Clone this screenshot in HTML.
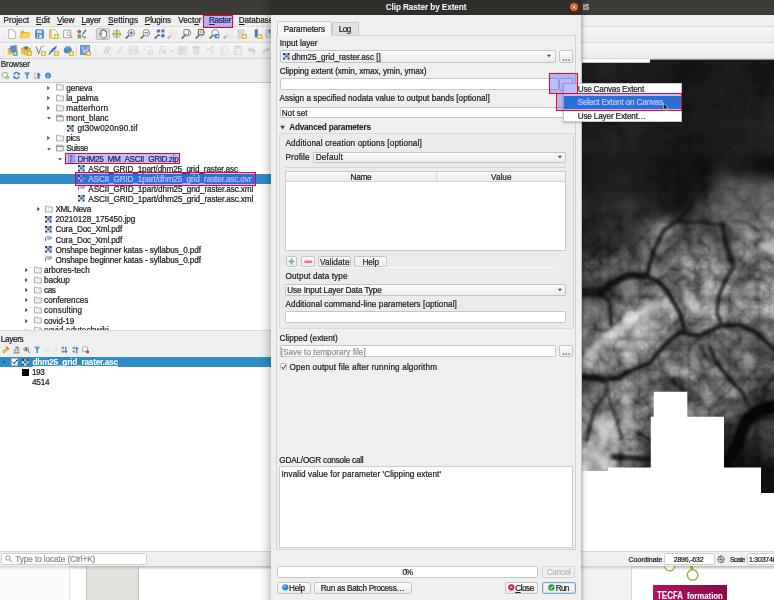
<!DOCTYPE html>
<html><head><meta charset="utf-8"><title>Clip Raster by Extent</title>
<style>
html,body{margin:0;padding:0;}
body{width:774px;height:600px;overflow:hidden;position:relative;background:#efefef;font-family:"Liberation Sans","DejaVu Sans",sans-serif;font-size:8.2px;color:#1c1c1c;}
.a{position:absolute;box-sizing:border-box;}
.t{position:absolute;white-space:nowrap;line-height:1;-webkit-text-stroke:.22px currentColor;}
.t.b{-webkit-text-stroke:.08px currentColor;}
u{text-decoration:underline;text-underline-offset:0.8px;text-decoration-thickness:0.7px;}
.btn{position:absolute;box-sizing:border-box;border:1px solid #c4c4c4;border-radius:2px;background:linear-gradient(#fbfbfb,#ececec);}
.inp{position:absolute;box-sizing:border-box;border:1px solid #c6c6c6;border-radius:1.5px;background:#fff;}
.an{position:absolute;box-sizing:border-box;border:1.35px solid #f5001d;background:rgba(42,42,255,.3);}
.ln{position:absolute;background:#d2d2d2;}
svg{position:absolute;overflow:visible;}
</style></head><body>
<!-- ============ QGIS main window ============ -->
<div class="a" style="left:0;top:0;width:774px;height:14.6px;background:#3d3c38"></div>
<div class="a" style="left:0;top:14.6px;width:774px;height:44px;background:#efefef"></div>
<div class="a" style="left:0;top:27px;width:774px;height:15.2px;background:linear-gradient(#f6f6f6,#ececec)"></div>
<div class="a" style="left:0;top:43.2px;width:774px;height:15.2px;background:linear-gradient(#f6f6f6,#ececec)"></div>
<div class="ln" style="left:0;top:26px;width:774px;height:1px;background:#dcdcdc"></div>
<div class="ln" style="left:0;top:42.2px;width:774px;height:1px;background:#d8d8d8"></div>
<div class="ln" style="left:0;top:58.4px;width:774px;height:1px;background:#d4d4d4"></div>
<!-- Browser tree -->
<div class="a" style="left:0;top:81.8px;width:272px;height:248.4px;background:#fff;border-top:1px solid #c9c9c9;"></div>
<!-- selected row -->
<div class="a" style="left:0;top:174.2px;width:272px;height:9.6px;background:#308cc6"></div>
<!-- Layers -->
<div class="a" style="left:0;top:330.2px;width:272px;height:27px;background:#efefef;border-top:1px solid #d9d9d9"></div>
<div class="a" style="left:0;top:356.8px;width:272px;height:194.5px;background:#fff"></div>
<div class="a" style="left:0;top:357.2px;width:272px;height:9.6px;background:#308cc6"></div>
<div class="a" style="left:22.3px;top:369.2px;width:6.9px;height:6.4px;background:#000"></div>
<!-- map canvas -->
<div class="a" style="left:582px;top:59px;width:192px;height:492.3px;background:#fff"></div>
<svg style="left:582px;top:58px;overflow:hidden" width="192" height="438" viewBox="582 58 192 438">
<defs>
<clipPath id="demclip"><path d="M582 62.7 H650 V59.6 H775 V493 H761 V467.6 H724 V416.7 H687.3 V391.8 H653.8 V416.8 H650.8 V467.6 H608 V471 H582z"/></clipPath>
<filter id="b6" color-interpolation-filters="sRGB" x="-20%" y="-20%" width="140%" height="140%"><feGaussianBlur stdDeviation="6"/></filter>
<filter id="b3" color-interpolation-filters="sRGB" x="-20%" y="-20%" width="140%" height="140%"><feGaussianBlur stdDeviation="3"/></filter>
<filter id="b15" color-interpolation-filters="sRGB" x="-20%" y="-20%" width="140%" height="140%"><feGaussianBlur stdDeviation="1.4"/></filter>
<filter id="b08" color-interpolation-filters="sRGB" x="-20%" y="-20%" width="140%" height="140%"><feGaussianBlur stdDeviation="0.8"/></filter>
<filter id="veins" color-interpolation-filters="sRGB" x="0" y="0" width="100%" height="100%"><feTurbulence type="turbulence" baseFrequency="0.05" numOctaves="4" seed="11" result="t1"/><feColorMatrix in="t1" type="matrix" values="1 0 0 0 0  1 0 0 0 0  1 0 0 0 0  0 0 0 0 1" result="g1"/><feTurbulence type="turbulence" baseFrequency="0.037" numOctaves="4" seed="3" result="t2"/><feColorMatrix in="t2" type="matrix" values="1 0 0 0 0  1 0 0 0 0  1 0 0 0 0  0 0 0 0 1" result="g2"/><feComposite in="g1" in2="g2" operator="arithmetic" k1="0" k2="0.5" k3="0.5" k4="0"/><feColorMatrix type="matrix" values="1.9 0 0 0 -0.115  1.9 0 0 0 -0.115  1.9 0 0 0 -0.115  0 0 0 0 1"/><feGaussianBlur stdDeviation="0.5"/></filter>
<linearGradient id="vfade" x1="0" y1="0" x2="0" y2="1"><stop offset="0" stop-color="#fff" stop-opacity=".3"/><stop offset=".27" stop-color="#fff" stop-opacity=".35"/><stop offset=".46" stop-color="#fff" stop-opacity="1"/><stop offset="1" stop-color="#fff" stop-opacity="1"/></linearGradient>
<mask id="vmask" maskUnits="userSpaceOnUse" x="582" y="58" width="192" height="438"><rect x="582" y="58" width="192" height="438" fill="url(#vfade)"/></mask>
</defs>
<g clip-path="url(#demclip)">
<rect x="570" y="50" width="220" height="460" fill="#222"/>
<g filter="url(#b6)">
<rect x="560" y="58" width="40.5" height="20.5" fill="rgb(26,26,26)"/>
<rect x="600" y="58" width="20.5" height="20.5" fill="rgb(31,31,31)"/>
<rect x="620" y="58" width="20.5" height="20.5" fill="rgb(31,31,31)"/>
<rect x="640" y="58" width="20.5" height="20.5" fill="rgb(26,26,26)"/>
<rect x="660" y="58" width="20.5" height="20.5" fill="rgb(20,20,20)"/>
<rect x="560" y="78" width="40.5" height="20.5" fill="rgb(28,28,28)"/>
<rect x="600" y="78" width="20.5" height="20.5" fill="rgb(28,28,28)"/>
<rect x="620" y="78" width="20.5" height="20.5" fill="rgb(28,28,28)"/>
<rect x="640" y="78" width="20.5" height="20.5" fill="rgb(26,26,26)"/>
<rect x="660" y="78" width="20.5" height="20.5" fill="rgb(22,22,22)"/>
<rect x="560" y="98" width="40.5" height="20.5" fill="rgb(28,28,28)"/>
<rect x="600" y="98" width="20.5" height="20.5" fill="rgb(28,28,28)"/>
<rect x="620" y="98" width="20.5" height="20.5" fill="rgb(28,28,28)"/>
<rect x="640" y="98" width="20.5" height="20.5" fill="rgb(26,26,26)"/>
<rect x="660" y="98" width="20.5" height="20.5" fill="rgb(22,22,22)"/>
<rect x="560" y="118" width="40.5" height="20.5" fill="rgb(28,28,28)"/>
<rect x="600" y="118" width="20.5" height="20.5" fill="rgb(29,29,29)"/>
<rect x="620" y="118" width="20.5" height="20.5" fill="rgb(29,29,29)"/>
<rect x="640" y="118" width="20.5" height="20.5" fill="rgb(28,28,28)"/>
<rect x="660" y="118" width="20.5" height="20.5" fill="rgb(26,26,26)"/>
<rect x="560" y="138" width="40.5" height="20.5" fill="rgb(28,28,28)"/>
<rect x="600" y="138" width="20.5" height="20.5" fill="rgb(31,31,31)"/>
<rect x="620" y="138" width="20.5" height="20.5" fill="rgb(31,31,31)"/>
<rect x="640" y="138" width="20.5" height="20.5" fill="rgb(28,28,28)"/>
<rect x="660" y="138" width="20.5" height="20.5" fill="rgb(24,24,24)"/>
<rect x="674" y="58" width="20.5" height="20.5" fill="rgb(20,20,20)"/>
<rect x="694" y="58" width="20.5" height="20.5" fill="rgb(22,22,22)"/>
<rect x="714" y="58" width="20.5" height="20.5" fill="rgb(24,24,24)"/>
<rect x="734" y="58" width="20.5" height="20.5" fill="rgb(22,22,22)"/>
<rect x="754" y="58" width="50.5" height="20.5" fill="rgb(20,20,20)"/>
<rect x="774" y="58" width="50.5" height="20.5" fill="rgb(20,20,20)"/>
<rect x="674" y="78" width="20.5" height="20.5" fill="rgb(22,22,22)"/>
<rect x="694" y="78" width="20.5" height="20.5" fill="rgb(24,24,24)"/>
<rect x="714" y="78" width="20.5" height="20.5" fill="rgb(26,26,26)"/>
<rect x="734" y="78" width="20.5" height="20.5" fill="rgb(24,24,24)"/>
<rect x="754" y="78" width="50.5" height="20.5" fill="rgb(22,22,22)"/>
<rect x="774" y="78" width="50.5" height="20.5" fill="rgb(22,22,22)"/>
<rect x="674" y="98" width="20.5" height="20.5" fill="rgb(22,22,22)"/>
<rect x="694" y="98" width="20.5" height="20.5" fill="rgb(26,26,26)"/>
<rect x="714" y="98" width="20.5" height="20.5" fill="rgb(28,28,28)"/>
<rect x="734" y="98" width="20.5" height="20.5" fill="rgb(28,28,28)"/>
<rect x="754" y="98" width="50.5" height="20.5" fill="rgb(28,28,28)"/>
<rect x="774" y="98" width="50.5" height="20.5" fill="rgb(28,28,28)"/>
<rect x="674" y="118" width="20.5" height="20.5" fill="rgb(24,24,24)"/>
<rect x="694" y="118" width="20.5" height="20.5" fill="rgb(26,26,26)"/>
<rect x="714" y="118" width="20.5" height="20.5" fill="rgb(28,28,28)"/>
<rect x="734" y="118" width="20.5" height="20.5" fill="rgb(31,31,31)"/>
<rect x="754" y="118" width="50.5" height="20.5" fill="rgb(35,35,35)"/>
<rect x="774" y="118" width="50.5" height="20.5" fill="rgb(35,35,35)"/>
<rect x="674" y="138" width="20.5" height="20.5" fill="rgb(22,22,22)"/>
<rect x="694" y="138" width="20.5" height="20.5" fill="rgb(22,22,22)"/>
<rect x="714" y="138" width="20.5" height="20.5" fill="rgb(26,26,26)"/>
<rect x="734" y="138" width="20.5" height="20.5" fill="rgb(29,29,29)"/>
<rect x="754" y="138" width="50.5" height="20.5" fill="rgb(33,33,33)"/>
<rect x="774" y="138" width="50.5" height="20.5" fill="rgb(33,33,33)"/>
<rect x="560" y="158" width="40.5" height="20.5" fill="rgb(24,24,24)"/>
<rect x="600" y="158" width="20.5" height="20.5" fill="rgb(28,28,28)"/>
<rect x="620" y="158" width="20.5" height="20.5" fill="rgb(29,29,29)"/>
<rect x="640" y="158" width="20.5" height="20.5" fill="rgb(24,24,24)"/>
<rect x="660" y="158" width="20.5" height="20.5" fill="rgb(20,20,20)"/>
<rect x="560" y="178" width="40.5" height="20.5" fill="rgb(28,28,28)"/>
<rect x="600" y="178" width="20.5" height="20.5" fill="rgb(33,33,33)"/>
<rect x="620" y="178" width="20.5" height="20.5" fill="rgb(35,35,35)"/>
<rect x="640" y="178" width="20.5" height="20.5" fill="rgb(28,28,28)"/>
<rect x="660" y="178" width="20.5" height="20.5" fill="rgb(20,20,20)"/>
<rect x="560" y="198" width="40.5" height="20.5" fill="rgb(31,31,31)"/>
<rect x="600" y="198" width="20.5" height="20.5" fill="rgb(40,40,40)"/>
<rect x="620" y="198" width="20.5" height="20.5" fill="rgb(42,42,42)"/>
<rect x="640" y="198" width="20.5" height="20.5" fill="rgb(33,33,33)"/>
<rect x="660" y="198" width="20.5" height="20.5" fill="rgb(24,24,24)"/>
<rect x="560" y="218" width="40.5" height="20.5" fill="rgb(33,33,33)"/>
<rect x="600" y="218" width="20.5" height="20.5" fill="rgb(40,40,40)"/>
<rect x="620" y="218" width="20.5" height="20.5" fill="rgb(46,46,46)"/>
<rect x="640" y="218" width="20.5" height="20.5" fill="rgb(79,79,79)"/>
<rect x="660" y="218" width="20.5" height="20.5" fill="rgb(117,117,117)"/>
<rect x="560" y="238" width="40.5" height="20.5" fill="rgb(33,33,33)"/>
<rect x="600" y="238" width="20.5" height="20.5" fill="rgb(42,42,42)"/>
<rect x="620" y="238" width="20.5" height="20.5" fill="rgb(68,68,68)"/>
<rect x="640" y="238" width="20.5" height="20.5" fill="rgb(108,108,108)"/>
<rect x="660" y="238" width="20.5" height="20.5" fill="rgb(81,81,81)"/>
<rect x="674" y="158" width="20.5" height="20.5" fill="rgb(19,19,19)"/>
<rect x="694" y="158" width="20.5" height="20.5" fill="rgb(15,15,15)"/>
<rect x="714" y="158" width="20.5" height="20.5" fill="rgb(31,31,31)"/>
<rect x="734" y="158" width="20.5" height="20.5" fill="rgb(22,22,22)"/>
<rect x="754" y="158" width="50.5" height="20.5" fill="rgb(13,13,13)"/>
<rect x="774" y="158" width="50.5" height="20.5" fill="rgb(11,11,11)"/>
<rect x="674" y="178" width="20.5" height="20.5" fill="rgb(19,19,19)"/>
<rect x="694" y="178" width="20.5" height="20.5" fill="rgb(26,26,26)"/>
<rect x="714" y="178" width="20.5" height="20.5" fill="rgb(86,86,86)"/>
<rect x="734" y="178" width="20.5" height="20.5" fill="rgb(93,93,93)"/>
<rect x="754" y="178" width="50.5" height="20.5" fill="rgb(86,86,86)"/>
<rect x="774" y="178" width="50.5" height="20.5" fill="rgb(81,81,81)"/>
<rect x="674" y="198" width="20.5" height="20.5" fill="rgb(22,22,22)"/>
<rect x="694" y="198" width="20.5" height="20.5" fill="rgb(64,64,64)"/>
<rect x="714" y="198" width="20.5" height="20.5" fill="rgb(97,97,97)"/>
<rect x="734" y="198" width="20.5" height="20.5" fill="rgb(97,97,97)"/>
<rect x="754" y="198" width="50.5" height="20.5" fill="rgb(100,100,100)"/>
<rect x="774" y="198" width="50.5" height="20.5" fill="rgb(100,100,100)"/>
<rect x="674" y="218" width="20.5" height="20.5" fill="rgb(68,68,68)"/>
<rect x="694" y="218" width="20.5" height="20.5" fill="rgb(73,73,73)"/>
<rect x="714" y="218" width="20.5" height="20.5" fill="rgb(82,82,82)"/>
<rect x="734" y="218" width="20.5" height="20.5" fill="rgb(108,108,108)"/>
<rect x="754" y="218" width="50.5" height="20.5" fill="rgb(115,115,115)"/>
<rect x="774" y="218" width="50.5" height="20.5" fill="rgb(115,115,115)"/>
<rect x="674" y="238" width="20.5" height="20.5" fill="rgb(93,93,93)"/>
<rect x="694" y="238" width="20.5" height="20.5" fill="rgb(104,104,104)"/>
<rect x="714" y="238" width="20.5" height="20.5" fill="rgb(82,82,82)"/>
<rect x="734" y="238" width="20.5" height="20.5" fill="rgb(108,108,108)"/>
<rect x="754" y="238" width="50.5" height="20.5" fill="rgb(129,129,129)"/>
<rect x="774" y="238" width="50.5" height="20.5" fill="rgb(129,129,129)"/>
<rect x="560" y="258" width="40.5" height="20.5" fill="rgb(90,90,90)"/>
<rect x="600" y="258" width="20.5" height="20.5" fill="rgb(99,99,99)"/>
<rect x="620" y="258" width="20.5" height="20.5" fill="rgb(90,90,90)"/>
<rect x="640" y="258" width="20.5" height="20.5" fill="rgb(81,81,81)"/>
<rect x="660" y="258" width="20.5" height="20.5" fill="rgb(99,99,99)"/>
<rect x="560" y="278" width="40.5" height="20.5" fill="rgb(37,37,37)"/>
<rect x="600" y="278" width="20.5" height="20.5" fill="rgb(55,55,55)"/>
<rect x="620" y="278" width="20.5" height="20.5" fill="rgb(81,81,81)"/>
<rect x="640" y="278" width="20.5" height="20.5" fill="rgb(99,99,99)"/>
<rect x="660" y="278" width="20.5" height="20.5" fill="rgb(90,90,90)"/>
<rect x="560" y="298" width="40.5" height="20.5" fill="rgb(90,90,90)"/>
<rect x="600" y="298" width="20.5" height="20.5" fill="rgb(81,81,81)"/>
<rect x="620" y="298" width="20.5" height="20.5" fill="rgb(108,108,108)"/>
<rect x="640" y="298" width="20.5" height="20.5" fill="rgb(153,153,153)"/>
<rect x="660" y="298" width="20.5" height="20.5" fill="rgb(135,135,135)"/>
<rect x="560" y="318" width="40.5" height="20.5" fill="rgb(99,99,99)"/>
<rect x="600" y="318" width="20.5" height="20.5" fill="rgb(90,90,90)"/>
<rect x="620" y="318" width="20.5" height="20.5" fill="rgb(162,162,162)"/>
<rect x="640" y="318" width="20.5" height="20.5" fill="rgb(171,171,171)"/>
<rect x="660" y="318" width="20.5" height="20.5" fill="rgb(135,135,135)"/>
<rect x="560" y="338" width="40.5" height="20.5" fill="rgb(108,108,108)"/>
<rect x="600" y="338" width="20.5" height="20.5" fill="rgb(126,126,126)"/>
<rect x="620" y="338" width="20.5" height="20.5" fill="rgb(153,153,153)"/>
<rect x="640" y="338" width="20.5" height="20.5" fill="rgb(126,126,126)"/>
<rect x="660" y="338" width="20.5" height="20.5" fill="rgb(90,90,90)"/>
<rect x="674" y="258" width="20.5" height="20.5" fill="rgb(117,117,117)"/>
<rect x="694" y="258" width="20.5" height="20.5" fill="rgb(126,126,126)"/>
<rect x="714" y="258" width="20.5" height="20.5" fill="rgb(108,108,108)"/>
<rect x="734" y="258" width="20.5" height="20.5" fill="rgb(81,81,81)"/>
<rect x="754" y="258" width="50.5" height="20.5" fill="rgb(108,108,108)"/>
<rect x="774" y="258" width="50.5" height="20.5" fill="rgb(108,108,108)"/>
<rect x="674" y="278" width="20.5" height="20.5" fill="rgb(117,117,117)"/>
<rect x="694" y="278" width="20.5" height="20.5" fill="rgb(135,135,135)"/>
<rect x="714" y="278" width="20.5" height="20.5" fill="rgb(126,126,126)"/>
<rect x="734" y="278" width="20.5" height="20.5" fill="rgb(99,99,99)"/>
<rect x="754" y="278" width="50.5" height="20.5" fill="rgb(126,126,126)"/>
<rect x="774" y="278" width="50.5" height="20.5" fill="rgb(126,126,126)"/>
<rect x="674" y="298" width="20.5" height="20.5" fill="rgb(135,135,135)"/>
<rect x="694" y="298" width="20.5" height="20.5" fill="rgb(153,153,153)"/>
<rect x="714" y="298" width="20.5" height="20.5" fill="rgb(126,126,126)"/>
<rect x="734" y="298" width="20.5" height="20.5" fill="rgb(108,108,108)"/>
<rect x="754" y="298" width="50.5" height="20.5" fill="rgb(135,135,135)"/>
<rect x="774" y="298" width="50.5" height="20.5" fill="rgb(135,135,135)"/>
<rect x="674" y="318" width="20.5" height="20.5" fill="rgb(108,108,108)"/>
<rect x="694" y="318" width="20.5" height="20.5" fill="rgb(117,117,117)"/>
<rect x="714" y="318" width="20.5" height="20.5" fill="rgb(117,117,117)"/>
<rect x="734" y="318" width="20.5" height="20.5" fill="rgb(99,99,99)"/>
<rect x="754" y="318" width="50.5" height="20.5" fill="rgb(108,108,108)"/>
<rect x="774" y="318" width="50.5" height="20.5" fill="rgb(108,108,108)"/>
<rect x="674" y="338" width="20.5" height="20.5" fill="rgb(99,99,99)"/>
<rect x="694" y="338" width="20.5" height="20.5" fill="rgb(90,90,90)"/>
<rect x="714" y="338" width="20.5" height="20.5" fill="rgb(90,90,90)"/>
<rect x="734" y="338" width="20.5" height="20.5" fill="rgb(99,99,99)"/>
<rect x="754" y="338" width="50.5" height="20.5" fill="rgb(81,81,81)"/>
<rect x="774" y="338" width="50.5" height="20.5" fill="rgb(81,81,81)"/>
<rect x="560" y="358" width="40.5" height="20.5" fill="rgb(126,126,126)"/>
<rect x="600" y="358" width="20.5" height="20.5" fill="rgb(135,135,135)"/>
<rect x="620" y="358" width="20.5" height="20.5" fill="rgb(135,135,135)"/>
<rect x="640" y="358" width="20.5" height="20.5" fill="rgb(99,99,99)"/>
<rect x="660" y="358" width="20.5" height="20.5" fill="rgb(135,135,135)"/>
<rect x="560" y="378" width="40.5" height="20.5" fill="rgb(81,81,81)"/>
<rect x="600" y="378" width="20.5" height="20.5" fill="rgb(99,99,99)"/>
<rect x="620" y="378" width="20.5" height="20.5" fill="rgb(126,126,126)"/>
<rect x="640" y="378" width="20.5" height="20.5" fill="rgb(117,117,117)"/>
<rect x="660" y="378" width="20.5" height="20.5" fill="rgb(90,90,90)"/>
<rect x="560" y="398" width="40.5" height="20.5" fill="rgb(108,108,108)"/>
<rect x="600" y="398" width="20.5" height="20.5" fill="rgb(126,126,126)"/>
<rect x="620" y="398" width="20.5" height="20.5" fill="rgb(153,153,153)"/>
<rect x="640" y="398" width="20.5" height="20.5" fill="rgb(126,126,126)"/>
<rect x="660" y="398" width="20.5" height="20.5" fill="rgb(126,126,126)"/>
<rect x="560" y="418" width="40.5" height="20.5" fill="rgb(135,135,135)"/>
<rect x="600" y="418" width="20.5" height="20.5" fill="rgb(171,171,171)"/>
<rect x="620" y="418" width="20.5" height="20.5" fill="rgb(153,153,153)"/>
<rect x="640" y="418" width="20.5" height="20.5" fill="rgb(117,117,117)"/>
<rect x="660" y="418" width="20.5" height="20.5" fill="rgb(117,117,117)"/>
<rect x="560" y="438" width="40.5" height="20.5" fill="rgb(153,153,153)"/>
<rect x="600" y="438" width="20.5" height="20.5" fill="rgb(171,171,171)"/>
<rect x="620" y="438" width="20.5" height="20.5" fill="rgb(135,135,135)"/>
<rect x="640" y="438" width="20.5" height="20.5" fill="rgb(81,81,81)"/>
<rect x="660" y="438" width="20.5" height="20.5" fill="rgb(81,81,81)"/>
<rect x="560" y="458" width="40.5" height="20.5" fill="rgb(180,180,180)"/>
<rect x="600" y="458" width="20.5" height="20.5" fill="rgb(180,180,180)"/>
<rect x="620" y="458" width="20.5" height="20.5" fill="rgb(81,81,81)"/>
<rect x="640" y="458" width="20.5" height="20.5" fill="rgb(55,55,55)"/>
<rect x="660" y="458" width="20.5" height="20.5" fill="rgb(55,55,55)"/>
<rect x="560" y="478" width="40.5" height="20.5" fill="rgb(180,180,180)"/>
<rect x="600" y="478" width="20.5" height="20.5" fill="rgb(180,180,180)"/>
<rect x="620" y="478" width="20.5" height="20.5" fill="rgb(81,81,81)"/>
<rect x="640" y="478" width="20.5" height="20.5" fill="rgb(55,55,55)"/>
<rect x="660" y="478" width="20.5" height="20.5" fill="rgb(55,55,55)"/>
<rect x="674" y="358" width="20.5" height="20.5" fill="rgb(135,135,135)"/>
<rect x="694" y="358" width="20.5" height="20.5" fill="rgb(112,112,112)"/>
<rect x="714" y="358" width="20.5" height="20.5" fill="rgb(94,94,94)"/>
<rect x="734" y="358" width="20.5" height="20.5" fill="rgb(112,112,112)"/>
<rect x="754" y="358" width="50.5" height="20.5" fill="rgb(103,103,103)"/>
<rect x="774" y="358" width="50.5" height="20.5" fill="rgb(99,99,99)"/>
<rect x="674" y="378" width="20.5" height="20.5" fill="rgb(67,67,67)"/>
<rect x="694" y="378" width="20.5" height="20.5" fill="rgb(103,103,103)"/>
<rect x="714" y="378" width="20.5" height="20.5" fill="rgb(112,112,112)"/>
<rect x="734" y="378" width="20.5" height="20.5" fill="rgb(94,94,94)"/>
<rect x="754" y="378" width="50.5" height="20.5" fill="rgb(76,76,76)"/>
<rect x="774" y="378" width="50.5" height="20.5" fill="rgb(72,72,72)"/>
<rect x="674" y="398" width="20.5" height="20.5" fill="rgb(99,99,99)"/>
<rect x="694" y="398" width="20.5" height="20.5" fill="rgb(106,106,106)"/>
<rect x="714" y="398" width="20.5" height="20.5" fill="rgb(106,106,106)"/>
<rect x="734" y="398" width="20.5" height="20.5" fill="rgb(57,57,57)"/>
<rect x="754" y="398" width="50.5" height="20.5" fill="rgb(20,20,20)"/>
<rect x="774" y="398" width="50.5" height="20.5" fill="rgb(15,15,15)"/>
<rect x="674" y="418" width="20.5" height="20.5" fill="rgb(90,90,90)"/>
<rect x="694" y="418" width="20.5" height="20.5" fill="rgb(90,90,90)"/>
<rect x="714" y="418" width="20.5" height="20.5" fill="rgb(55,55,55)"/>
<rect x="734" y="418" width="20.5" height="20.5" fill="rgb(35,35,35)"/>
<rect x="754" y="418" width="50.5" height="20.5" fill="rgb(59,59,59)"/>
<rect x="774" y="418" width="50.5" height="20.5" fill="rgb(63,63,63)"/>
<rect x="674" y="438" width="20.5" height="20.5" fill="rgb(55,55,55)"/>
<rect x="694" y="438" width="20.5" height="20.5" fill="rgb(55,55,55)"/>
<rect x="714" y="438" width="20.5" height="20.5" fill="rgb(28,28,28)"/>
<rect x="734" y="438" width="20.5" height="20.5" fill="rgb(24,24,24)"/>
<rect x="754" y="438" width="50.5" height="20.5" fill="rgb(42,42,42)"/>
<rect x="774" y="438" width="50.5" height="20.5" fill="rgb(46,46,46)"/>
<rect x="674" y="458" width="20.5" height="20.5" fill="rgb(37,37,37)"/>
<rect x="694" y="458" width="20.5" height="20.5" fill="rgb(37,37,37)"/>
<rect x="714" y="458" width="20.5" height="20.5" fill="rgb(20,20,20)"/>
<rect x="734" y="458" width="20.5" height="20.5" fill="rgb(13,13,13)"/>
<rect x="754" y="458" width="50.5" height="20.5" fill="rgb(17,17,17)"/>
<rect x="774" y="458" width="50.5" height="20.5" fill="rgb(19,19,19)"/>
<rect x="674" y="478" width="20.5" height="20.5" fill="rgb(28,28,28)"/>
<rect x="694" y="478" width="20.5" height="20.5" fill="rgb(28,28,28)"/>
<rect x="714" y="478" width="20.5" height="20.5" fill="rgb(17,17,17)"/>
<rect x="734" y="478" width="20.5" height="20.5" fill="rgb(13,13,13)"/>
<rect x="754" y="478" width="50.5" height="20.5" fill="rgb(15,15,15)"/>
<rect x="774" y="478" width="50.5" height="20.5" fill="rgb(15,15,15)"/>
<rect x="674" y="498" width="20.5" height="20.5" fill="rgb(28,28,28)"/>
<rect x="694" y="498" width="20.5" height="20.5" fill="rgb(28,28,28)"/>
<rect x="714" y="498" width="20.5" height="20.5" fill="rgb(17,17,17)"/>
<rect x="734" y="498" width="20.5" height="20.5" fill="rgb(13,13,13)"/>
<rect x="754" y="498" width="50.5" height="20.5" fill="rgb(15,15,15)"/>
<rect x="774" y="498" width="50.5" height="20.5" fill="rgb(15,15,15)"/>
</g>
<g filter="url(#b3)" fill="none" stroke-linecap="round" stroke-linejoin="round">
<path d="M588.0 354.0 L606.0 338.0 L623.0 325.0 L645.0 312.0 L668.0 300.0" stroke="#d8d8d8" stroke-width="9" opacity="0.8"/>
<path d="M626.0 398.0 L627.0 430.0" stroke="#d0d0d0" stroke-width="4" opacity="0.8"/>
<path d="M600.0 420.0 L603.0 436.0" stroke="#eeeeee" stroke-width="8" opacity="0.8"/>
<path d="M688.0 292.0 L692.0 308.0" stroke="#dddddd" stroke-width="7" opacity="0.7"/>
<path d="M590.0 452.0 L604.0 462.0" stroke="#e6e6e6" stroke-width="8" opacity="0.8"/>
<path d="M668.0 366.0 L676.0 372.0" stroke="#c4c4c4" stroke-width="8" opacity="0.7"/>
</g>
<g filter="url(#b15)" fill="none" stroke-linecap="round" stroke-linejoin="round">
<path d="M578.0 293.0 L600.0 291.5" stroke="#0c0c0c" stroke-width="9" opacity="1"/>
<path d="M580.0 293.0 L601.7 291.0 L618.0 280.0 L630.0 275.0 L647.0 276.0" stroke="#101010" stroke-width="6.5" opacity="1"/>
<path d="M647.0 276.0 L660.0 283.0 L667.0 291.0 L673.0 301.0 L680.0 313.0 L684.0 328.0" stroke="#141414" stroke-width="4" opacity="1"/>
<path d="M692.0 204.0 L681.0 218.0 L664.0 230.0 L655.0 248.0 L649.0 266.0 L647.0 276.0" stroke="#141414" stroke-width="4" opacity="0.95"/>
<path d="M686.0 231.0 L688.7 250.0 L699.0 260.7" stroke="#3c3c3c" stroke-width="2.2" opacity="0.8"/>
<path d="M731.0 220.7 L747.0 223.0 L758.0 231.0" stroke="#303030" stroke-width="2.4" opacity="0.8"/>
<path d="M722.0 224.0 L726.0 244.7 L734.0 267.0" stroke="#101010" stroke-width="4.6" opacity="1"/>
<path d="M578.0 376.5 L604.0 379.0" stroke="#111" stroke-width="7" opacity="1"/>
<path d="M580.0 376.0 L605.0 379.0 L618.0 378.0 L630.0 371.0 L650.0 363.0 L655.0 356.0 L666.0 344.0 L680.0 332.0 L699.0 336.0 L720.0 326.0 L740.0 325.0 L757.0 333.0 L776.0 351.0" stroke="#181818" stroke-width="4.4" opacity="1"/>
<path d="M672.0 222.0 L700.0 222.0 L722.0 225.0 L724.0 240.0 L728.0 252.0 L731.0 258.0 L734.0 266.0 L724.0 283.0 L719.0 296.0 L717.0 313.0 L721.0 323.0" stroke="#1e1e1e" stroke-width="3.6" opacity="1"/>
<path d="M703.0 178.0 L705.0 196.0" stroke="#141414" stroke-width="5" opacity="0.7"/>
<path d="M606.7 379.0 L605.0 396.0 L595.0 408.0 L590.0 425.0 L586.7 441.0" stroke="#2a2a2a" stroke-width="3.2" opacity="1"/>
<path d="M606.7 379.0 L610.0 402.0 L617.0 421.0 L622.0 440.0" stroke="#363636" stroke-width="2.6" opacity="1"/>
<path d="M638.0 433.0 L650.0 440.0" stroke="#202020" stroke-width="3.5" opacity="1"/>
<path d="M614.0 457.0 L652.0 459.0" stroke="#1c1c1c" stroke-width="6" opacity="1"/>
<path d="M710.0 346.7 L715.0 360.0 L723.0 370.7 L731.0 381.0 L742.0 392.0 L747.0 402.7 L753.0 410.0" stroke="#181818" stroke-width="3.6" opacity="1"/>
<path d="M778.0 406.0 L760.0 410.0 L748.0 418.0 L741.0 433.0 L737.0 446.0 L729.0 458.0 L725.0 470.0" stroke="#060606" stroke-width="12" opacity="1"/>
<path d="M776.0 375.0 L765.7 386.0 L764.0 400.0" stroke="#1c1c1c" stroke-width="3.2" opacity="1"/>
<path d="M603.0 295.0 L610.0 303.0 L611.0 325.0" stroke="#141414" stroke-width="3.2" opacity="1"/>
<path d="M610.0 303.0 L638.0 303.0 L635.0 310.0" stroke="#505050" stroke-width="2.2" opacity="1"/>
<path d="M653.0 401.0 L641.7 406.0 L635.0 400.0" stroke="#404040" stroke-width="2" opacity="1"/>
<path d="M672.0 380.0 L683.0 390.0" stroke="#202020" stroke-width="4.5" opacity="1"/>
<path d="M734.0 266.0 L749.0 268.0 L776.0 276.0" stroke="#4a4a4a" stroke-width="3" opacity="0.8"/>
<path d="M690.0 258.0 L697.0 275.0 L690.0 296.0" stroke="#555" stroke-width="2" opacity="0.7"/>
<path d="M740.0 280.0 L745.0 300.0 L742.0 318.0" stroke="#606060" stroke-width="2" opacity="0.7"/>
<path d="M756.0 290.0 L760.0 310.0" stroke="#606060" stroke-width="2" opacity="0.7"/>
<path d="M590.0 300.0 L596.0 330.0 L590.0 345.0" stroke="#4a4a4a" stroke-width="2" opacity="0.7"/>
<path d="M640.0 330.0 L650.0 345.0" stroke="#555" stroke-width="2" opacity="0.6"/>
<path d="M700.0 345.0 L706.0 356.0" stroke="#333" stroke-width="2.5" opacity="0.8"/>
<path d="M690.0 400.0 L715.0 395.0 L735.0 402.0" stroke="#444" stroke-width="2" opacity="0.7"/>
<path d="M700.0 372.0 L716.0 384.0" stroke="#444" stroke-width="2" opacity="0.7"/>
<path d="M755.0 430.0 L764.0 450.0" stroke="#2a2a2a" stroke-width="3" opacity="0.8"/>
</g>
<g mask="url(#vmask)" style="mix-blend-mode:overlay">
<rect x="582" y="58" width="192" height="438" filter="url(#veins)" opacity=".5" style="mix-blend-mode:overlay"/></g>
</g>
</svg>
<!-- status bar -->
<div class="a" style="left:0;top:551.3px;width:774px;height:15px;background:#efefef;border-top:1px solid #d6d6d6;"></div>
<div class="inp" style="left:1px;top:553px;width:145.5px;height:12.3px;border-color:#cfcfcf"></div>
<div class="inp" style="left:664px;top:553px;width:50.5px;height:12.3px;border-color:#cfcfcf"></div>
<div class="inp" style="left:746.5px;top:553px;width:40px;height:12.3px;border-color:#cfcfcf"></div>
<!-- below the QGIS window: another app -->
<div class="a" style="left:0;top:566.3px;width:774px;height:34px;background:#fff"></div>
<div class="a" style="left:0;top:566.3px;width:774px;height:4px;background:linear-gradient(rgba(0,0,0,.16),rgba(0,0,0,0))"></div>
<div class="a" style="left:0;top:566.3px;width:70px;height:34px;background:#fafafa;border-right:1px solid #e3e3e3"></div>
<div class="a" style="left:85.5px;top:566.3px;width:53.5px;height:34px;background:#e4e2dd;box-shadow:inset 1px 0 1px #c5c3be, inset -1px 0 1px #c5c3be"></div>
<div class="a" style="left:582px;top:566.3px;width:49.5px;height:34px;background:#f1f1f1;border-right:1px solid #d8d8d8"></div>
<div class="a" style="left:653px;top:585px;width:74px;height:16px;background:linear-gradient(90deg,#b3125f,#8c0a47)"></div>
<svg style="left:655px;top:566.3px;overflow:hidden" width="50" height="20" viewBox="655 566.3 50 20"><circle cx="669.7" cy="566.3" r="4.9" fill="#fff" stroke="#94b13c" stroke-width="1.3"/><circle cx="692.6" cy="575.3" r="5.3" fill="#fff" stroke="#94b13c" stroke-width="1.4"/><path d="M689.6 566.3 h3.4 l0.4 4 h-2.6z" fill="#94b13c"/></svg>
<div class="a" style="left:0;top:566.3px;width:774px;height:4px;background:linear-gradient(rgba(0,0,0,.14),rgba(0,0,0,0))"></div>
<svg style="left:2.5px;top:29.5px" width="3" height="10" viewBox="0 0 3 10" ><path d="M1 0 V10" stroke="#d9d9d9" stroke-width=".9" stroke-dasharray=".9 .9"/></svg>
<svg style="left:2.5px;top:45.5px" width="3" height="10" viewBox="0 0 3 10" ><path d="M1 0 V10" stroke="#d9d9d9" stroke-width=".9" stroke-dasharray=".9 .9"/></svg>
<svg style="left:93.8px;top:29.5px" width="3" height="10" viewBox="0 0 3 10" ><path d="M1 0 V10" stroke="#d9d9d9" stroke-width=".9" stroke-dasharray=".9 .9"/></svg>
<svg style="left:94.8px;top:45.5px" width="3" height="10" viewBox="0 0 3 10" ><path d="M1 0 V10" stroke="#d9d9d9" stroke-width=".9" stroke-dasharray=".9 .9"/></svg>
<svg style="left:7.9px;top:29.3px" width="8" height="10" viewBox="0 0 8 10" ><path d="M0.6 0.5 H5 L7.4 2.9 V9.5 H0.6z" fill="#fff" stroke="#a9a9a9" stroke-width=".8"/><path d="M5 0.5 V2.9 H7.4" fill="none" stroke="#b5b5b5" stroke-width=".6"/></svg>
<svg style="left:20.4px;top:29.3px" width="11" height="10" viewBox="0 0 11 10" ><path d="M0.6 1.8 H3.8 L4.6 2.9 H8.6 V8.8 H0.6z" fill="#e9b43a"/><path d="M0.4 9 L1.9 4 H10.4 L8.8 9z" fill="#fbd25b" stroke="#e2ad30" stroke-width=".5"/></svg>
<svg style="left:35.3px;top:29.3px" width="9" height="10" viewBox="0 0 9 10" ><rect x=".5" y=".8" width="8" height="8.5" rx=".9" fill="#5b8ed0" stroke="#3f6fb0" stroke-width=".7"/><rect x="2" y="1.2" width="5" height="2.8" fill="#c9dcf3"/><rect x="2.3" y="5.8" width="4.4" height="3.3" fill="#e8eef7"/><rect x="3" y="6.5" width="1.4" height="2" fill="#3f5f8f"/></svg>
<svg style="left:49px;top:29.3px" width="10" height="10" viewBox="0 0 10 10" ><path d="M0.6 0.8 H6 L8.4 3.2 V9.3 H0.6z" fill="#fdfdfd" stroke="#b0a070" stroke-width=".7"/><rect x="0.6" y="0.8" width="2.1" height="8.5" fill="#e8c244"/><rect x="5.2" y="5.4" width="4.4" height="4.2" fill="#e8c63c" stroke="#c7a320" stroke-width=".5"/><path d="M7.4 6.2 V8.8 M6.1 7.5 H8.7" stroke="#fff" stroke-width=".9"/></svg>
<svg style="left:62.5px;top:29.3px" width="10" height="10" viewBox="0 0 10 10" ><path d="M0.6 1.3 H7.8 V8.7 H0.6z" fill="#fcfcfc" stroke="#8c99b3" stroke-width=".8"/><circle cx="5.6" cy="4.8" r="1.9" fill="#f4f4f4" stroke="#9a9a9a" stroke-width=".7"/><path d="M6.9 6.3 L9.3 9.2" stroke="#caa52b" stroke-width="1.3"/></svg>
<svg style="left:76.5px;top:29.3px" width="10" height="10" viewBox="0 0 10 10" ><circle cx="2.3" cy="2.6" r="1.9" fill="#d9553a"/><rect x=".5" y="5.2" width="3.6" height="4.2" fill="#6aa76a"/><path d="M9 .8 L5.6 5.4" stroke="#4a7fc0" stroke-width="1.5"/><path d="M5.2 6 L6.5 7.2 L4.6 8.2z" fill="#6b6b6b"/><rect x="6.2" y="7.4" width="2.6" height="2" fill="#8d8d8d"/></svg>
<div class="a" style="left:96.3px;top:28px;width:13.5px;height:12.3px;background:#dadada;border:1px solid #bdbdbd;border-radius:1.5px"></div>
<svg style="left:99px;top:29.3px" width="9" height="10" viewBox="0 0 9 10" ><path d="M2.2 5.6 V2 Q2.2 1.3 2.9 1.3 Q3.5 1.3 3.5 2 V1.3 Q3.5 .6 4.2 .6 Q4.9 .6 4.9 1.3 V1.7 Q4.9 1.1 5.6 1.1 Q6.2 1.1 6.2 1.8 V2.5 Q6.3 2 6.9 2 Q7.5 2 7.5 2.8 V6.2 Q7.5 9.2 4.9 9.2 Q3.3 9.2 2.4 7.6 L.8 5.2 Q.5 4.5 1.1 4.3 Q1.6 4.2 2.2 5.6z" fill="#fff" stroke="#3a3a3a" stroke-width=".7"/></svg>
<svg style="left:111.8px;top:29.3px" width="10" height="10" viewBox="0 0 10 10" ><path d="M4.8 .2 L6.5 2.2 H3.1z M4.8 9.6 L6.5 7.6 H3.1z M.1 4.9 L2.1 3.2 V6.6z M9.5 4.9 L7.5 3.2 V6.6z" fill="#4f86c6"/><path d="M4.8 1.9 L7.8 4.9 L4.8 7.9 L1.8 4.9z" fill="#f1d23c" stroke="#c9a81f" stroke-width=".5"/><path d="M1.4 1.5 L2.9 3 M8.2 1.5 L6.7 3 M1.4 8.3 L2.9 6.8 M8.2 8.3 L6.7 6.8" stroke="#e6c534" stroke-width="1.3"/><circle cx="4.8" cy="4.9" r="1" fill="#4f86c6"/></svg>
<svg style="left:125.4px;top:29.3px" width="11" height="10" viewBox="0 0 11 10" ><g opacity="1"><path d="M4.3 6 L.8 9.4" stroke="#3f3f3f" stroke-width="1.7"/><path d="M4 6.3 L1.2 9" stroke="#c9a227" stroke-width="1"/><circle cx="6.3" cy="3.8" r="3.3" fill="#f8f8f8" stroke="#6f6f6f" stroke-width=".8"/><path d="M6.3 1.9 V5.7 M4.4 3.8 H8.2" stroke="#3f78bf" stroke-width="1.2"/></g></svg>
<svg style="left:139.5px;top:29.3px" width="11" height="10" viewBox="0 0 11 10" ><g opacity="1"><path d="M4.3 6 L.8 9.4" stroke="#3f3f3f" stroke-width="1.7"/><path d="M4 6.3 L1.2 9" stroke="#c9a227" stroke-width="1"/><circle cx="6.3" cy="3.8" r="3.3" fill="#f8f8f8" stroke="#6f6f6f" stroke-width=".8"/><path d="M4.4 3.8 H8.2" stroke="#3f78bf" stroke-width="1.2"/></g></svg>
<svg style="left:153.8px;top:29.3px" width="11" height="10" viewBox="0 0 11 10" ><path d="M4.3 6 L.8 9.4" stroke="#3f3f3f" stroke-width="1.7"/><path d="M4 6.3 L1.2 9" stroke="#c9a227" stroke-width="1"/><path d="M2.8 .4 H6 V3.4 H2.8z M7.2 .4 H10.4 V3.4 H7.2z M7.2 5 H10.4 V8.2 H7.2z M4 5 H6 V7 H4z" fill="#3f78bf"/><path d="M5.2 2.6 L8.2 5.8 M8.2 2.6 L5.2 5.8" stroke="#dfe9f5" stroke-width=".8"/></svg>
<svg style="left:167.3px;top:29.3px" width="11" height="10" viewBox="0 0 11 10" ><g opacity="0.55"><path d="M4.3 6 L.8 9.4" stroke="#3f3f3f" stroke-width="1.7"/><path d="M4 6.3 L1.2 9" stroke="#d8d2bf" stroke-width="1"/><circle cx="6.3" cy="3.8" r="3.3" fill="#f3f3f3" stroke="#cfcfcf" stroke-width=".8"/><rect x="3.2" y=".8" width="4" height="4" fill="#e8e4d4"/></g></svg>
<svg style="left:181.2px;top:29.3px" width="11" height="10" viewBox="0 0 11 10" ><g opacity="1"><path d="M4.3 6 L.8 9.4" stroke="#3f3f3f" stroke-width="1.7"/><path d="M4 6.3 L1.2 9" stroke="#c9a227" stroke-width="1"/><circle cx="6.3" cy="3.8" r="3.3" fill="#f8f8f8" stroke="#666" stroke-width=".8"/><rect x="3" y=".7" width="4.6" height="4.6" fill="#fff" stroke="#555" stroke-width=".6"/></g></svg>
<svg style="left:195.2px;top:29.3px" width="11" height="10" viewBox="0 0 11 10" ><g opacity="1"><path d="M4.3 6 L.8 9.4" stroke="#3f3f3f" stroke-width="1.7"/><path d="M4 6.3 L1.2 9" stroke="#c9a227" stroke-width="1"/><circle cx="6.3" cy="3.8" r="3.3" fill="#f8f8f8" stroke="#777" stroke-width=".8"/><rect x="3.6" y=".6" width="4.6" height="4.8" fill="#fff" stroke="#444" stroke-width=".7"/><path d="M4.6 2 H7.2 M4.6 3.3 H7.2" stroke="#555" stroke-width=".6"/></g></svg>
<svg style="left:208.9px;top:29.3px" width="11" height="10" viewBox="0 0 11 10" ><g opacity="1"><path d="M4.3 6 L.8 9.4" stroke="#3f3f3f" stroke-width="1.7"/><path d="M4 6.3 L1.2 9" stroke="#c9a227" stroke-width="1"/><circle cx="6.3" cy="3.8" r="3.3" fill="#f8f8f8" stroke="#777" stroke-width=".8"/><rect x="5.6" y="5" width="4.8" height="4.3" fill="#4f86c6"/><path d="M9.4 5.9 L7 7.2 L9.4 8.5z" fill="#fff"/></g></svg>
<svg style="left:222.9px;top:29.3px" width="11" height="10" viewBox="0 0 11 10" ><g opacity="0.6"><path d="M4.3 6 L.8 9.4" stroke="#3f3f3f" stroke-width="1.7"/><path d="M4 6.3 L1.2 9" stroke="#ddd8c8" stroke-width="1"/><circle cx="6.3" cy="3.8" r="3.3" fill="#f4f4f4" stroke="#cfcfcf" stroke-width=".8"/><rect x="5.6" y="5" width="4.8" height="4.3" fill="#dfe3ea"/></g></svg>
<svg style="left:237.3px;top:29.3px" width="10" height="10" viewBox="0 0 10 10" ><path d="M.8 .8 H6.6 Q7.6 3 6.8 5 Q6.2 7 7.2 9.2 H.8 Q1.6 7 1 5 Q.4 3 .8 .8z" fill="#d9d9d9" stroke="#b5b5b5" stroke-width=".5"/><rect x="5.1" y="5.3" width="4.5" height="4.3" fill="#e8c63c" stroke="#c7a320" stroke-width=".5"/><path d="M7.35 6.1 V8.8 M6 7.45 H8.7" stroke="#fff" stroke-width=".9"/></svg>
<svg style="left:253.6px;top:29.3px" width="9" height="10" viewBox="0 0 9 10" ><path d="M.8 .3 H3.8 V8 Q2.3 9 .8 8z" fill="#3f78bf"/><rect x="3.4" y="5.3" width="4.5" height="4.3" fill="#e8c63c" stroke="#c7a320" stroke-width=".5"/><path d="M5.65 6.1 V8.8 M4.3 7.45 H7" stroke="#fff" stroke-width=".9"/></svg>
<svg style="left:265px;top:29.3px" width="8" height="10" viewBox="0 0 8 10" ><path d="M.8 .8 H6 V9 H.8z" fill="#d5d5d5" stroke="#b0b0b0" stroke-width=".5"/><path d="M4.5 .3 V4" stroke="#3f78bf" stroke-width="1.5"/></svg>
<svg style="left:6.8px;top:45.3px" width="11" height="11" viewBox="0 0 11 11" ><path d="M1.2 3.4 L5.2 2.2 L6.4 7.2 L2.4 8.6z" fill="#e36c2c"/><path d="M.4 4.6 L4.6 4 L5.2 9.2 L1 9.6z" fill="#f0b53a"/><path d="M3.4 1 L9.4 .4 L9.8 6.4 L4 7z" fill="#5b8ed0" stroke="#3f6fb0" stroke-width=".4"/><rect x="6.2" y="6.6" width="4" height="3.8" fill="#6ab06f" stroke="#3f8c47" stroke-width=".5"/><path d="M8.2 7.3 V9.7 M7 8.5 H9.4" stroke="#fff" stroke-width=".8"/></svg>
<svg style="left:20.6px;top:45.3px" width="11" height="11" viewBox="0 0 11 11" ><path d="M.5 3.6 L5 1 L9.6 3.4 L9.6 8 L5 10.2 L.5 8z" fill="#f0c63a" stroke="#c79f20" stroke-width=".5"/><path d="M.5 3.6 L5 5.8 L9.6 3.4" fill="none" stroke="#c79f20" stroke-width=".5"/><ellipse cx="5" cy="3" rx="2.6" ry="1.5" fill="#5b8ed0"/><ellipse cx="5.2" cy="2.8" rx="1" ry=".6" fill="#1f3d66"/><rect x="6.3" y="6.4" width="4.4" height="4.2" fill="#e8c63c" stroke="#c7a320" stroke-width=".5"/><path d="M8.5 7.2 V9.8 M7.2 8.5 H9.8" stroke="#fff" stroke-width=".9"/></svg>
<svg style="left:34.6px;top:45.3px" width="11" height="11" viewBox="0 0 11 11" ><path d="M1 1.2 L3.6 8.6 L6.4 1.6" fill="none" stroke="#6f6f6f" stroke-width=".9"/><path d="M6.8 1.4 H9" stroke="#6f6f6f" stroke-width=".7" stroke-dasharray=".8 .6"/><rect x="6.3" y="6.4" width="4.4" height="4.2" fill="#e8c63c" stroke="#c7a320" stroke-width=".5"/><path d="M8.5 7.2 V9.8 M7.2 8.5 H9.8" stroke="#fff" stroke-width=".9"/></svg>
<svg style="left:48px;top:45.3px" width="11" height="11" viewBox="0 0 11 11" ><path d="M.6 9.8 Q2.2 4.4 8.8 .6 Q9 4.6 3.6 7.6 L1.2 9.9z" fill="#4f86c6"/><path d="M.6 9.9 Q3.4 5 8.4 1.2" stroke="#23508f" stroke-width=".5" fill="none"/><rect x="6.3" y="6.4" width="4.4" height="4.2" fill="#e8c63c" stroke="#c7a320" stroke-width=".5"/><path d="M8.5 7.2 V9.8 M7.2 8.5 H9.8" stroke="#fff" stroke-width=".9"/></svg>
<svg style="left:62.8px;top:45.3px" width="11" height="11" viewBox="0 0 11 11" ><rect x=".8" y="2.6" width="8" height="5.6" rx="2.2" fill="#4f86c6"/><rect x="2.2" y="1.3" width="5.4" height="2.4" rx="1" fill="#6b9bd4"/><rect x="6.3" y="6.4" width="4.4" height="4.2" fill="#e8c63c" stroke="#c7a320" stroke-width=".5"/><path d="M8.5 7.2 V9.8 M7.2 8.5 H9.8" stroke="#fff" stroke-width=".9"/></svg>
<div class="ln" style="left:76px;top:45.5px;width:1px;height:10.5px;background:#d6d6d6"></div>
<svg style="left:79.7px;top:45.3px" width="11" height="11" viewBox="0 0 11 11" ><rect x=".5" y=".7" width="9.2" height="8.8" fill="#6f9bd3" stroke="#3f6fb0" stroke-width=".6"/><path d="M2 1.8 L4.4 8 L5.4 4.6 L6.6 8 L8.6 1.8" fill="none" stroke="#dbe7f5" stroke-width=".9"/><rect x="6.3" y="6.4" width="4.4" height="4.2" fill="#e8c63c" stroke="#c7a320" stroke-width=".5"/><path d="M8.5 7.2 V9.8 M7.2 8.5 H9.8" stroke="#fff" stroke-width=".9"/></svg>
<svg style="left:101.5px;top:45.3px" width="10" height="11" viewBox="0 0 10 11" ><path d="M1 8.6 L4.6 1 L6 1.8 L2.2 9.2z M4 8.6 L7.6 1 L9 1.8 L5.4 9.2z" fill="#d3d3d3"/><path d="M7.2 9 H9.2 L8.2 10.2z" fill="#d3d3d3"/></svg>
<svg style="left:115.6px;top:45.3px" width="8" height="11" viewBox="0 0 8 11" ><path d="M1 9.2 L1.6 7 L5.6 1 L7 1.9 L3 7.9z" fill="#e0e0e0" stroke="#d3d3d3" stroke-width=".4"/></svg>
<svg style="left:129px;top:45.3px" width="10" height="11" viewBox="0 0 10 11" ><rect x=".6" y="1" width="8" height="8" rx=".8" fill="#e0e0e0" stroke="#d3d3d3" stroke-width=".6"/><rect x="2" y="1.4" width="5" height="2.6" fill="#ececec"/><rect x="2.4" y="6" width="4.4" height="3" fill="#ececec"/><path d="M6 7 L9.4 5.4" stroke="#d3d3d3" stroke-width="1.1"/></svg>
<svg style="left:143px;top:45.3px" width="11" height="11" viewBox="0 0 11 11" ><circle cx="1.4" cy="4.4" r=".9" fill="#d3d3d3"/><circle cx="4" cy="1.4" r=".9" fill="#d3d3d3"/><circle cx="7.6" cy="2" r=".9" fill="#d3d3d3"/><rect x="5.4" y="5.4" width="4.2" height="4.2" rx=".8" fill="#e6e6e6" stroke="#d3d3d3" stroke-width=".8"/></svg>
<svg style="left:158px;top:45.3px" width="10" height="11" viewBox="0 0 10 11" ><path d="M1.4 9.4 L3 1.4 L8 1.4" fill="none" stroke="#d3d3d3" stroke-width=".9"/><path d="M3.6 4 L8.4 9 M8 4.2 L3.6 9" stroke="#d3d3d3" stroke-width="1.1"/></svg>
<svg style="left:169.6px;top:49.6px" width="4" height="3" viewBox="0 0 4 3" ><path d="M.2 .3 H3.6 L1.9 2.4z" fill="#d3d3d3"/></svg>
<svg style="left:177.5px;top:45.3px" width="10" height="11" viewBox="0 0 10 11" ><rect x=".5" y="1.4" width="8.4" height="7.8" fill="#e3e1da" stroke="#d3d3d3" stroke-width=".5"/><path d="M1 8.6 L8 2 M2.6 1.6 V9 M.6 4.4 H8.8" stroke="#d3d3d3" stroke-width=".7"/></svg>
<svg style="left:191.8px;top:45.3px" width="9" height="11" viewBox="0 0 9 11" ><path d="M1.2 3.2 H7.6 L7 9.6 H1.8z" fill="#e4d9d9"/><rect x=".6" y="1.8" width="7.6" height="1.3" fill="#dccdcd"/><rect x="3" y=".8" width="2.8" height="1" fill="#dccdcd"/><path d="M3 4.2 V8.6 M4.4 4.2 V8.6 M5.8 4.2 V8.6" stroke="#efe2e2" stroke-width=".6"/></svg>
<svg style="left:205.4px;top:45.3px" width="10" height="11" viewBox="0 0 10 11" ><path d="M.6 2.6 L8.6 6.6 M.6 6.4 L8.6 2.4" stroke="#d3d3d3" stroke-width=".8"/><circle cx="7.6" cy="7.6" r="1.3" fill="none" stroke="#d3d3d3" stroke-width=".7"/><circle cx="7.4" cy="2" r="1.1" fill="none" stroke="#d3d3d3" stroke-width=".7"/></svg>
<svg style="left:219.6px;top:45.3px" width="9" height="11" viewBox="0 0 9 11" ><rect x=".6" y="3" width="5" height="6.4" fill="#ebebeb" stroke="#d3d3d3" stroke-width=".6"/><path d="M2.8 1 H6 L7.8 2.8 V8 H2.8z" fill="#efefef" stroke="#d3d3d3" stroke-width=".6"/></svg>
<svg style="left:233.8px;top:45.3px" width="9" height="11" viewBox="0 0 9 11" ><rect x=".6" y="1.4" width="7.2" height="8.4" fill="#e0e0e0" stroke="#d3d3d3" stroke-width=".6"/><rect x="2.4" y=".6" width="3.6" height="1.6" fill="#d3d3d3"/><rect x="2.8" y="3.6" width="4" height="5.2" fill="#f1f1f1"/></svg>
<svg style="left:247.3px;top:45.3px" width="9" height="11" viewBox="0 0 9 11" ><path d="M.6 4.4 L3.8 1.6 V3.4 Q8.2 3.4 8.2 7 Q8.2 9 6 9.6 Q7 8.4 6.2 6.8 Q5.4 5.6 3.8 5.6 V7.4z" fill="#d9c8bf"/></svg>
<svg style="left:261.8px;top:45.3px" width="9" height="11" viewBox="0 0 9 11" ><path d="M8.4 4.4 L5.2 1.6 V3.4 Q.8 3.4 .8 7 Q.8 9 3 9.6 Q2 8.4 2.8 6.8 Q3.6 5.6 5.2 5.6 V7.4z" fill="#c9d3c9"/></svg>
<svg style="left:2.2px;top:72.2px" width="8" height="8" viewBox="0 0 8 8" ><rect x=".5" y=".6" width="4.8" height="4.6" rx=".6" fill="#f7f7f7" stroke="#8f8f8f" stroke-width=".7"/><circle cx="5.3" cy="5.4" r="1.7" fill="#5fae66"/><path d="M5.3 4.5 V6.3 M4.4 5.4 H6.2" stroke="#fff" stroke-width=".6"/></svg>
<svg style="left:12.7px;top:72.2px" width="8" height="8" viewBox="0 0 8 8" ><path d="M5.9 2 A2.7 2.7 0 0 0 .9 2.6 M1.1 5 A2.7 2.7 0 0 0 6.1 4.4" fill="none" stroke="#3f86d0" stroke-width="1.5"/><path d="M6.9 .4 V3 H4.3z M.1 6.6 V4 H2.7z" fill="#3f86d0"/></svg>
<svg style="left:23.6px;top:72.2px" width="7" height="8" viewBox="0 0 7 8" ><path d="M.3 .5 H6 L3.9 3.2 V6.8 H2.5 V3.2z" fill="#3f86d0"/><path d="M.3 .5 H6 V1.3 H.3z" fill="#8db8e6"/></svg>
<svg style="left:34px;top:72.2px" width="8" height="8" viewBox="0 0 8 8" ><rect x=".5" y="1.6" width="3" height="5" fill="#f3f3f3" stroke="#9a9a9a" stroke-width=".5"/><path d="M3.8 6.8 V3.2 H2.6 L4.7 .6 L6.8 3.2 H5.6 V6.8z" fill="#3f78bf"/><rect x=".8" y="5.4" width="1.6" height="1.3" fill="#e9a13a"/></svg>
<svg style="left:44.7px;top:72.2px" width="7" height="8" viewBox="0 0 7 8" ><circle cx="3" cy="3.5" r="2.9" fill="#3f86d0"/><path d="M3 3 V5.2" stroke="#e6f0fb" stroke-width=".9"/><circle cx="3" cy="1.9" r=".5" fill="#e6f0fb"/></svg>
<svg style="left:2.4px;top:346px" width="8" height="8" viewBox="0 0 8 8" ><path d="M.8 4 L4.8 2 L6.2 4.6 L2.2 6.6z" fill="#e8b53a"/><path d="M4.4 1 L6.8 3.4" stroke="#d34a2a" stroke-width="1.3"/><path d="M.6 5.6 L2.6 7" stroke="#8b5a2a" stroke-width=".9"/></svg>
<svg style="left:12.8px;top:346px" width="8" height="8" viewBox="0 0 8 8" ><rect x="2.4" y=".6" width="3.4" height="2.4" fill="#7aa37a"/><rect x=".6" y="3.6" width="2.6" height="1.8" fill="#9a9a9a"/><rect x="3.8" y="3.6" width="2.6" height="1.8" fill="#7aa37a"/><rect x=".6" y="6" width="5.8" height="1.5" fill="#9a9a9a"/></svg>
<svg style="left:23.3px;top:346px" width="8" height="8" viewBox="0 0 8 8" ><ellipse cx="3.2" cy="3.2" rx="2.6" ry="1.7" fill="#e7eef7" stroke="#4a5f7a" stroke-width=".7"/><circle cx="3.2" cy="3.2" r="1" fill="#24364f"/><path d="M4.6 4.6 L7.2 6.4 L6 6.6 L6.4 7.6z" fill="#333"/></svg>
<svg style="left:33.8px;top:346px" width="7" height="8" viewBox="0 0 7 8" ><path d="M.3 .7 H6 L3.9 3.4 V7 H2.5 V3.4z" fill="#3f86d0"/><path d="M.3 .7 H6 V1.5 H.3z" fill="#8db8e6"/></svg>
<svg style="left:44.6px;top:346px" width="8" height="8" viewBox="0 0 8 8" ><path d="M1 1 V5 H3 M3.4 2.4 L4.4 3 M4.6 5 H6.4" stroke="#d0d0d0" stroke-width=".8" fill="none"/></svg>
<svg style="left:54.4px;top:349.2px" width="4" height="3" viewBox="0 0 4 3" ><path d="M.2 .3 H3.6 L1.9 2.4z" fill="#cfcfcf"/></svg>
<svg style="left:61.4px;top:346px" width="8" height="8" viewBox="0 0 8 8" ><rect x=".6" y=".8" width="2.4" height="2" fill="#8a8a8a"/><rect x=".6" y="4.6" width="2.4" height="2" fill="#8a8a8a"/><path d="M5.4 .6 V5 H6.8 L4.8 7.4 L2.9 5 H4.2 V.6z" fill="#3f78bf"/></svg>
<svg style="left:72px;top:346px" width="8" height="8" viewBox="0 0 8 8" ><rect x=".6" y=".8" width="2.4" height="2" fill="#8a8a8a"/><rect x=".6" y="4.6" width="2.4" height="2" fill="#8a8a8a"/><path d="M5.4 7.4 V3 H6.8 L4.8 .6 L2.9 3 H4.2 V7.4z" fill="#3f78bf"/></svg>
<svg style="left:82.4px;top:346px" width="8" height="8" viewBox="0 0 8 8" ><rect x=".6" y=".8" width="5" height="4.8" rx=".6" fill="#f7f7f7" stroke="#8f8f8f" stroke-width=".7"/><circle cx="5.6" cy="5.8" r="1.6" fill="#e0303a"/></svg>
<svg style="left:4.8px;top:554.8px" width="8" height="8" viewBox="0 0 8 8" ><circle cx="3" cy="3" r="2.2" fill="none" stroke="#8f8f8f" stroke-width=".9"/><path d="M4.6 4.7 L6.8 7" stroke="#8f8f8f" stroke-width="1"/></svg>
<svg style="left:717px;top:554.6px" width="9" height="9" viewBox="0 0 9 9" ><circle cx="4" cy="4.4" r="3.2" fill="none" stroke="#555" stroke-width=".8"/><path d="M1.6 1.4 L6.8 7.6 M4 1.2 V7.6 M.8 4.4 H7.2 M3 .2 L5.2 1.6" stroke="#555" stroke-width=".6"/></svg>
<svg width="0" height="0" style="left:0;top:0"><defs>
<g id="fold"><path d="M0.5 1.1 H3.2 L3.9 2 H7.3 V7 H0.5z" fill="#f2f2f2" stroke="#9b9b9b" stroke-width=".8"/></g>
<g id="fopen"><path d="M0.5 1.1 H3.2 L3.9 2 H7.3 V7 H0.5z" fill="#f2f2f2" stroke="#8a8a8a" stroke-width=".8"/><path d="M0.5 2.6 H7.3" stroke="#8a8a8a" stroke-width=".9"/><path d="M3.6 1.2 H6.6" stroke="#8a8a8a" stroke-width=".7"/></g>
<g id="ras"><rect x="0" y="0" width="6.6" height="6.6" fill="#eef3fa"/><path d="M0 0h2.2v2.2h-2.2z M4.4 0h2.2v2.2h-2.2z M2.2 2.2h2.2v2.2h-2.2z M0 4.4h2.2v2.2h-2.2z M4.4 4.4h2.2v2.2h-2.2z" fill="#223f66"/><path d="M2.2 0h2.2v2.2h-2.2z M4.4 2.2h2.2v2.2h-2.2z" fill="#86a8d2"/><path d="M0 2.2h2.2v2.2h-2.2z M2.2 4.4h2.2v2.2h-2.2z" fill="#cbdaee"/></g>
<g id="vec"><path d="M0.6 5.2 V1.8 Q0.6 1 1.6 1 H6 Q7 1 6.6 2 Q6.2 3 5 3 H2.2" fill="none" stroke="#6c7482" stroke-width="1"/></g>
<g id="ar"><path d="M0.2 0 L2.8 2.1 L0.2 4.2z" fill="#4a4a4a"/></g>
<g id="ad"><path d="M0 0.2 H4 L2 2.5z" fill="#4a4a4a"/></g>
<g id="zip"><rect x="0.3" y="0" width="6.2" height="7.2" fill="#e8e8ee" stroke="#9a9ab0" stroke-width=".6"/><path d="M2.6 0 V7.2 M3.9 0 V7.2" stroke="#6a6a8a" stroke-width=".8"/></g>
</defs></svg>
<svg style="left:47.1px;top:85.7px" width="9" height="9"><use href="#ar"/></svg>
<svg style="left:55.5px;top:83.4px" width="9" height="9"><use href="#fold"/></svg>
<svg style="left:47.1px;top:95.8px" width="9" height="9"><use href="#ar"/></svg>
<svg style="left:55.5px;top:93.5px" width="9" height="9"><use href="#fold"/></svg>
<svg style="left:47.1px;top:106.0px" width="9" height="9"><use href="#ar"/></svg>
<svg style="left:55.5px;top:103.6px" width="9" height="9"><use href="#fold"/></svg>
<svg style="left:47.1px;top:136.3px" width="9" height="9"><use href="#ar"/></svg>
<svg style="left:55.5px;top:134.0px" width="9" height="9"><use href="#fold"/></svg>
<svg style="left:46.7px;top:117.1px" width="9" height="9"><use href="#ad"/></svg>
<svg style="left:55.5px;top:113.8px" width="9" height="9"><use href="#fopen"/></svg>
<svg style="left:46.7px;top:147.5px" width="9" height="9"><use href="#ad"/></svg>
<svg style="left:55.5px;top:144.2px" width="9" height="9"><use href="#fopen"/></svg>
<svg style="left:36.6px;top:207.2px" width="9" height="9"><use href="#ar"/></svg>
<svg style="left:45.0px;top:204.9px" width="9" height="9"><use href="#fold"/></svg>
<svg style="left:25.2px;top:267.9px" width="9" height="9"><use href="#ar"/></svg>
<svg style="left:33.6px;top:265.7px" width="9" height="9"><use href="#fold"/></svg>
<svg style="left:25.2px;top:278.1px" width="9" height="9"><use href="#ar"/></svg>
<svg style="left:33.6px;top:275.8px" width="9" height="9"><use href="#fold"/></svg>
<svg style="left:25.2px;top:288.2px" width="9" height="9"><use href="#ar"/></svg>
<svg style="left:33.6px;top:285.9px" width="9" height="9"><use href="#fold"/></svg>
<svg style="left:25.2px;top:298.3px" width="9" height="9"><use href="#ar"/></svg>
<svg style="left:33.6px;top:296.0px" width="9" height="9"><use href="#fold"/></svg>
<svg style="left:25.2px;top:308.4px" width="9" height="9"><use href="#ar"/></svg>
<svg style="left:33.6px;top:306.2px" width="9" height="9"><use href="#fold"/></svg>
<svg style="left:25.2px;top:318.6px" width="9" height="9"><use href="#ar"/></svg>
<svg style="left:33.6px;top:316.3px" width="9" height="9"><use href="#fold"/></svg>
<svg style="left:57.9px;top:157.6px" width="9" height="9"><use href="#ad"/></svg>
<svg style="left:68.2px;top:154.6px" width="9" height="9"><use href="#zip"/></svg>
<svg style="left:67.2px;top:124.5px" width="9" height="9"><use href="#ras"/></svg>
<svg style="left:78.3px;top:165.0px" width="9" height="9"><use href="#ras"/></svg>
<svg style="left:78.3px;top:175.1px" width="9" height="9"><use href="#ras"/></svg>
<svg style="left:78.3px;top:195.4px" width="9" height="9"><use href="#ras"/></svg>
<svg style="left:78.3px;top:185.2px" width="9" height="9"><use href="#vec"/></svg>
<svg style="left:45.0px;top:215.6px" width="9" height="9"><use href="#ras"/></svg>
<svg style="left:45.0px;top:225.8px" width="9" height="9"><use href="#ras"/></svg>
<svg style="left:45.0px;top:246.0px" width="9" height="9"><use href="#ras"/></svg>
<svg style="left:44.6px;top:235.9px" width="9" height="9"><use href="#vec"/></svg>
<svg style="left:44.6px;top:256.1px" width="9" height="9"><use href="#vec"/></svg>
<div class="a" style="left:0;top:325px;width:272px;height:5.2px;overflow:hidden;will-change:transform">
<svg style="left:25.2px;top:3.7px" width="9" height="9"><use href="#ar"/></svg>
<svg style="left:33.6px;top:1.4px" width="9" height="9"><use href="#fold"/></svg>
<div class="t" style="left:44.1px;top:2px">covid-edutechwiki</div>
</div>
<svg style="left:2.4px;top:360.6px" width="9" height="9"><use href="#ad"/></svg>
<div class="a" style="left:11.3px;top:358.4px;width:7.2px;height:7.2px;background:#fff;border:.6px solid #9fb9cf"></div>
<svg style="left:12.3px;top:359.3px" width="6" height="6" viewBox="0 0 6 6"><path d="M0.8 3 L2.3 4.8 L5 0.8" stroke="#222" stroke-width="1" fill="none"/></svg>
<svg style="left:21.8px;top:358.6px" width="9" height="9"><use href="#ras"/></svg>
<!-- ============ Dialog ============ -->
<div class="a" style="left:259px;top:0;width:12.3px;height:600px;background:linear-gradient(90deg,rgba(0,0,0,0),rgba(0,0,0,.05) 50%,rgba(0,0,0,.2))"></div>
<div class="a" style="left:581.4px;top:0;width:7px;height:600px;background:linear-gradient(90deg,rgba(0,0,0,.22),rgba(0,0,0,.05) 50%,rgba(0,0,0,0))"></div>
<div class="a" style="left:271.2px;top:0;width:310.2px;height:600px;background:#efefef"></div>
<div class="a" style="left:271.2px;top:0;width:310.2px;height:14.6px;background:#2f2e2b"></div>
<svg style="left:569px;top:2px" width="10" height="10" viewBox="0 0 10 10"><circle cx="5" cy="5" r="4.1" fill="#ea5a2c"/><path d="M3.5 3.5 L6.5 6.5 M6.5 3.5 L3.5 6.5" stroke="#fbe3d6" stroke-width="1"/></svg>
<!-- tab pane -->
<div class="a" style="left:276.3px;top:34.8px;width:299.4px;height:515px;border:1px solid #d0d0d0;background:#efefef"></div>
<div class="a" style="left:332px;top:21.7px;width:26.8px;height:13.8px;border:1px solid #c9c9c9;border-bottom:none;border-radius:2px 2px 0 0;background:#e2e2e2"></div>
<div class="a" style="left:276.7px;top:20.8px;width:55.8px;height:15.4px;border:1px solid #c9c9c9;border-bottom:none;border-radius:2px 2px 0 0;background:#f6f6f6"></div>
<!-- input layer combo -->
<div class="btn" style="left:279.5px;top:50.2px;width:276.2px;height:12.5px"></div>
<div class="btn" style="left:558.5px;top:50.2px;width:14.8px;height:12.5px"></div>
<svg style="left:546px;top:54px" width="6" height="4" viewBox="0 0 6 4"><path d="M0.7 0.7 L5.1 0.7 L2.9 3.3z" fill="#4a4a4a"/></svg>
<svg style="left:561.5px;top:58.5px" width="9" height="2" viewBox="0 0 9 2"><circle cx="1.5" cy="1" r=".7" fill="#333"/><circle cx="4.3" cy="1" r=".7" fill="#333"/><circle cx="7.1" cy="1" r=".7" fill="#333"/></svg>
<svg style="left:282.6px;top:53px" width="9" height="9"><use href="#ras"/></svg>
<!-- extent input -->
<div class="inp" style="left:279.5px;top:78.2px;width:279px;height:12.3px"></div>
<div class="btn" style="left:558.5px;top:78.2px;width:14.8px;height:12.5px"></div>
<!-- not set -->
<div class="inp" style="left:279.5px;top:106.5px;width:293.8px;height:11.7px"></div>
<!-- advanced -->
<svg style="left:280px;top:125px" width="6" height="5" viewBox="0 0 6 5"><path d="M0.3 0.8 L5 0.8 L2.65 4.4z" fill="#3a3a3a"/></svg>
<div class="a" style="left:279.3px;top:133.4px;width:294.4px;height:195.6px;border:1px solid #dadada;border-radius:2px;background:#ebebeb"></div>
<div class="btn" style="left:313.2px;top:151.6px;width:253.2px;height:11.8px"></div>
<svg style="left:557.3px;top:155.3px" width="6" height="4" viewBox="0 0 6 4"><path d="M0.7 0.7 L5.1 0.7 L2.9 3.3z" fill="#4a4a4a"/></svg>
<div class="ln" style="left:285.3px;top:166.6px;width:281px;height:1px;background:#d4d4d4"></div>
<!-- table -->
<div class="a" style="left:285.3px;top:171.2px;width:281.2px;height:80.2px;border:1px solid #c9c9c9;background:#fff"></div>
<div class="a" style="left:286.3px;top:172.2px;width:279.2px;height:10.2px;background:linear-gradient(#fafafa,#ebebeb);border-bottom:1px solid #d5d5d5"></div>
<div class="ln" style="left:435.5px;top:172.2px;width:1px;height:10.2px;background:#d5d5d5"></div>
<!-- table buttons -->
<div class="btn" style="left:285.6px;top:256.2px;width:11.8px;height:10.4px"></div>
<div class="btn" style="left:300.6px;top:256.2px;width:14px;height:10.4px"></div>
<div class="btn" style="left:317.7px;top:256.2px;width:33.6px;height:10.4px"></div>
<div class="btn" style="left:354.4px;top:256.2px;width:33px;height:10.4px"></div>
<div class="ln" style="left:285.6px;top:267.2px;width:270px;height:1px;background:#fafafa"></div>
<svg style="left:288px;top:258px" width="7" height="7" viewBox="0 0 7 7"><path d="M3.5 0.6 V6.4 M0.6 3.5 H6.4" stroke="#6fb072" stroke-width="1.7"/></svg>
<svg style="left:303.5px;top:259.5px" width="9" height="4" viewBox="0 0 9 4"><rect x="0.3" y="0.6" width="8" height="2.5" rx=".8" fill="#f0707c"/></svg>
<!-- output data type -->
<div class="btn" style="left:285.3px;top:283.6px;width:281.2px;height:12.3px"></div>
<svg style="left:557.3px;top:288px" width="6" height="4" viewBox="0 0 6 4"><path d="M0.7 0.7 L5.1 0.7 L2.9 3.3z" fill="#4a4a4a"/></svg>
<div class="inp" style="left:285.3px;top:311.2px;width:281.2px;height:12.3px"></div>
<!-- clipped -->
<div class="inp" style="left:279.5px;top:345.2px;width:276.2px;height:12px"></div>
<div class="btn" style="left:558.5px;top:345.2px;width:14.8px;height:12.2px"></div>
<svg style="left:561.5px;top:353px" width="9" height="2" viewBox="0 0 9 2"><circle cx="1.5" cy="1" r=".7" fill="#333"/><circle cx="4.3" cy="1" r=".7" fill="#333"/><circle cx="7.1" cy="1" r=".7" fill="#333"/></svg>
<!-- checkbox -->
<div class="inp" style="left:279.5px;top:363px;width:7.3px;height:7.4px;border-color:#bdbdbd"></div>
<svg style="left:280.5px;top:364px" width="6" height="6" viewBox="0 0 6 6"><path d="M0.8 3 L2.3 4.8 L5 0.8" stroke="#222" stroke-width="1" fill="none"/></svg>
<!-- console -->
<div class="a" style="left:279.2px;top:466.4px;width:294.3px;height:81.3px;border:1px solid #cdcdcd;background:#fff"></div>
<!-- progress / buttons -->
<div class="inp" style="left:276.7px;top:565.5px;width:261.8px;height:12.2px"></div>
<div class="btn" style="left:542.4px;top:565.5px;width:33px;height:12.5px;border-color:#d6d6d6;background:#f1f1f1"></div>
<div class="btn" style="left:276.7px;top:582px;width:34.1px;height:11.9px"></div>
<div class="btn" style="left:313.6px;top:582px;width:98px;height:11.9px"></div>
<div class="btn" style="left:505.2px;top:582px;width:33.3px;height:11.9px"></div>
<div class="btn" style="left:542.2px;top:581.7px;width:33.4px;height:12.2px;border-color:#78a6d2;box-shadow:inset 0 0 0 .6px #b9d3ec"></div>
<svg style="left:281.5px;top:584.3px" width="7" height="7" viewBox="0 0 7 7"><circle cx="3.3" cy="3.3" r="3.1" fill="#2f86d6"/><circle cx="2.6" cy="2.4" r="1.1" fill="#9ccbf3"/></svg>
<svg style="left:508px;top:584.3px" width="7" height="7" viewBox="0 0 7 7"><circle cx="3.3" cy="3.3" r="3.1" fill="#d5122f"/><path d="M2.1 2.1 L4.5 4.5 M4.5 2.1 L2.1 4.5" stroke="#fff" stroke-width=".9"/></svg>
<svg style="left:548px;top:584.1px" width="7" height="7" viewBox="0 0 7 7"><circle cx="3.4" cy="3.4" r="3.2" fill="#2a9a3c"/><path d="M1.9 3.5 L3 4.7 L5 2.2" stroke="#fff" stroke-width=".9" fill="none"/></svg>
<!-- popup menu -->
<div class="a" style="left:563px;top:83px;width:118.7px;height:38.6px;background:#fff;border:1px solid #c8c8c8;box-shadow:0 1px 2px rgba(0,0,0,.25)"></div>
<div class="a" style="left:564px;top:95.6px;width:116.7px;height:13.6px;background:#308cc6"></div>
<div id="txt" style="position:absolute;left:0;top:0;width:774px;height:600px;will-change:transform">
<div class="t" style="left:3.5px;top:17.00px;font-size:8.2px;">Pro<u>j</u>ect</div>
<div class="t" style="left:36.0px;top:17.00px;font-size:8.2px;letter-spacing:-0.036px;"><u>E</u>dit</div>
<div class="t" style="left:57.0px;top:17.00px;font-size:8.2px;letter-spacing:-0.036px;"><u>V</u>iew</div>
<div class="t" style="left:81.5px;top:17.00px;font-size:8.2px;letter-spacing:-0.246px;"><u>L</u>ayer</div>
<div class="t" style="left:108.0px;top:17.00px;font-size:8.2px;letter-spacing:0.058px;"><u>S</u>ettings</div>
<div class="t" style="left:144.8px;top:17.00px;font-size:8.2px;letter-spacing:-0.110px;"><u>P</u>lugins</div>
<div class="t" style="left:178.2px;top:17.00px;font-size:8.2px;letter-spacing:0.016px;">Vect<u>o</u>r</div>
<div class="t" style="left:209.0px;top:17.00px;font-size:8.2px;letter-spacing:-0.325px;"><u>R</u>aster</div>
<div class="t" style="left:238.7px;top:17.00px;font-size:8.2px;letter-spacing:-0.080px;width:32.5px;overflow:hidden;"><u>D</u>atabase</div>
<div class="t" style="left:0.8px;top:61.00px;font-size:8.2px;letter-spacing:-0.139px;">Browser</div>
<div class="t" style="left:66.3px;top:85.00px;font-size:8.2px;letter-spacing:-0.135px;">geneva</div>
<div class="t" style="left:66.3px;top:95.00px;font-size:8.2px;letter-spacing:-0.176px;">la_palma</div>
<div class="t" style="left:66.3px;top:105.00px;font-size:8.2px;letter-spacing:0.234px;">matterhorn</div>
<div class="t" style="left:66.3px;top:115.00px;font-size:8.2px;">mont_blanc</div>
<div class="t" style="left:77.5px;top:125.00px;font-size:8.2px;letter-spacing:0.156px;">gt30w020n90.tif</div>
<div class="t" style="left:66.3px;top:135.00px;font-size:8.2px;letter-spacing:-0.288px;">pics</div>
<div class="t" style="left:66.3px;top:145.00px;font-size:8.2px;letter-spacing:-0.516px;">Suisse</div>
<div class="t" style="left:77.5px;top:156.00px;font-size:8.2px;letter-spacing:-0.384px;">DHM25_MM_ASCII_GRID.zip</div>
<div class="t" style="left:88.3px;top:166.00px;font-size:8.2px;letter-spacing:-0.148px;">ASCII_GRID_1part/dhm25_grid_raster.asc</div>
<div class="t" style="left:88.3px;top:176.00px;font-size:8.2px;color:#ffffff;letter-spacing:-0.138px;">ASCII_GRID_1part/dhm25_grid_raster.asc.ovr</div>
<div class="t" style="left:88.3px;top:186.00px;font-size:8.2px;letter-spacing:-0.127px;">ASCII_GRID_1part/dhm25_grid_raster.asc.xml</div>
<div class="t" style="left:88.3px;top:196.00px;font-size:8.2px;letter-spacing:-0.127px;">ASCII_GRID_1part/dhm25_grid_raster.asc.xml</div>
<div class="t" style="left:55.4px;top:206.00px;font-size:8.2px;letter-spacing:-0.303px;">XML Neva</div>
<div class="t" style="left:55.4px;top:216.00px;font-size:8.2px;letter-spacing:-0.090px;">20210128_175450.jpg</div>
<div class="t" style="left:55.4px;top:226.00px;font-size:8.2px;letter-spacing:-0.151px;">Cura_Doc_Xml.pdf</div>
<div class="t" style="left:55.4px;top:237.00px;font-size:8.2px;letter-spacing:-0.151px;">Cura_Doc_Xml.pdf</div>
<div class="t" style="left:55.4px;top:247.00px;font-size:8.2px;letter-spacing:-0.085px;">Onshape beginner katas - syllabus_0.pdf</div>
<div class="t" style="left:55.4px;top:257.00px;font-size:8.2px;letter-spacing:-0.085px;">Onshape beginner katas - syllabus_0.pdf</div>
<div class="t" style="left:44.1px;top:267.00px;font-size:8.2px;letter-spacing:-0.034px;">arbores-tech</div>
<div class="t" style="left:44.1px;top:277.00px;font-size:8.2px;letter-spacing:-0.141px;">backup</div>
<div class="t" style="left:44.1px;top:287.00px;font-size:8.2px;letter-spacing:-0.475px;">cas</div>
<div class="t" style="left:44.1px;top:297.00px;font-size:8.2px;letter-spacing:-0.041px;">conferences</div>
<div class="t" style="left:44.1px;top:307.00px;font-size:8.2px;letter-spacing:0.125px;">consulting</div>
<div class="t" style="left:44.1px;top:318.00px;font-size:8.2px;letter-spacing:-0.122px;">covid-19</div>
<div class="t" style="left:0.7px;top:336.00px;font-size:8.2px;letter-spacing:-0.316px;">Layers</div>
<div class="t b" style="left:32.5px;top:359.00px;font-size:8.2px;font-weight:bold;color:#ffffff;letter-spacing:-0.185px;text-decoration:underline;">dhm25_grid_raster.asc</div>
<div class="t" style="left:32.0px;top:369.00px;font-size:8.2px;letter-spacing:-0.486px;">193</div>
<div class="t" style="left:32.0px;top:379.00px;font-size:8.2px;letter-spacing:-0.240px;">4514</div>
<div class="t" style="left:15.3px;top:556.00px;font-size:8.2px;color:#8a8a8a;letter-spacing:-0.077px;">Type to locate (Ctrl+K)</div>
<div class="t" style="left:628.4px;top:556.00px;font-size:7px;letter-spacing:-0.028px;">Coordinate</div>
<div class="t" style="left:673.7px;top:556.00px;font-size:7px;letter-spacing:-0.204px;">2896,-632</div>
<div class="t" style="left:730.0px;top:556.00px;font-size:7px;letter-spacing:-0.554px;">Scale</div>
<div class="t" style="left:749.0px;top:556.00px;font-size:7px;letter-spacing:-0.243px;">1:303746</div>
<div class="t b" style="left:657.2px;top:590.00px;font-size:10.5px;font-weight:bold;color:#ffffff;transform-origin:0 50%;transform:scaleX(0.7582);">TECFA</div>
<div class="t b" style="left:686.7px;top:591.00px;font-size:9.4px;font-weight:bold;color:#ffffff;transform-origin:0 50%;transform:scaleX(0.8280);">formation</div>
<div class="t b" style="left:385.7px;top:4.00px;font-size:8.2px;font-weight:bold;color:#f2f1f0;letter-spacing:-0.078px;">Clip Raster by Extent</div>
<div class="t b" style="left:583.0px;top:4.00px;font-size:8.2px;font-weight:bold;color:#dcdad6;transform-origin:0 50%;transform:scaleX(0.8129);">IS</div>
<div class="t" style="left:283.7px;top:26.00px;font-size:8.2px;letter-spacing:-0.114px;">Parameters</div>
<div class="t" style="left:338.7px;top:26.00px;font-size:8.2px;letter-spacing:-0.536px;">Log</div>
<div class="t" style="left:279.7px;top:40.00px;font-size:8.2px;letter-spacing:-0.043px;">Input layer</div>
<div class="t" style="left:291.7px;top:54.00px;font-size:8.2px;letter-spacing:-0.049px;">dhm25_grid_raster.asc []</div>
<div class="t" style="left:279.7px;top:68.00px;font-size:8.2px;letter-spacing:-0.062px;">Clipping extent (xmin, xmax, ymin, ymax)</div>
<div class="t" style="left:279.5px;top:95.00px;font-size:8.2px;letter-spacing:0.014px;">Assign a specified nodata value to output bands [optional]</div>
<div class="t" style="left:281.7px;top:110.00px;font-size:8.2px;">Not set</div>
<div class="t b" style="left:289.2px;top:124.00px;font-size:8.2px;font-weight:bold;letter-spacing:-0.209px;">Advanced parameters</div>
<div class="t" style="left:285.5px;top:140.00px;font-size:8.2px;letter-spacing:0.126px;">Additional creation options [optional]</div>
<div class="t" style="left:285.5px;top:154.00px;font-size:8.2px;letter-spacing:0.130px;">Profile</div>
<div class="t" style="left:315.7px;top:154.00px;font-size:8.2px;letter-spacing:0.174px;">Default</div>
<div class="t" style="left:350.5px;top:174.00px;font-size:8.2px;letter-spacing:-0.281px;">Name</div>
<div class="t" style="left:491.0px;top:174.00px;font-size:8.2px;letter-spacing:0.039px;">Value</div>
<div class="t" style="left:320.0px;top:259.00px;font-size:8.2px;letter-spacing:0.074px;">Validate</div>
<div class="t" style="left:362.5px;top:259.00px;font-size:8.2px;letter-spacing:-0.115px;">Help</div>
<div class="t" style="left:285.5px;top:273.00px;font-size:8.2px;letter-spacing:0.097px;">Output data type</div>
<div class="t" style="left:287.3px;top:287.00px;font-size:8.2px;letter-spacing:-0.115px;">Use Input Layer Data Type</div>
<div class="t" style="left:285.5px;top:301.00px;font-size:8.2px;letter-spacing:0.056px;">Additional command-line parameters [optional]</div>
<div class="t" style="left:279.5px;top:335.00px;font-size:8.2px;letter-spacing:0.034px;">Clipped (extent)</div>
<div class="t" style="left:280.7px;top:349.00px;font-size:8.2px;color:#8c8c8c;letter-spacing:0.035px;">[Save to temporary file]</div>
<div class="t" style="left:289.5px;top:364.00px;font-size:8.2px;letter-spacing:0.141px;">Open output file after running algorithm</div>
<div class="t" style="left:279.3px;top:457.00px;font-size:8.2px;letter-spacing:-0.194px;">GDAL/OGR console call</div>
<div class="t" style="left:281.5px;top:471.00px;font-size:8.2px;letter-spacing:0.068px;">Invalid value for parameter 'Clipping extent'</div>
<div class="t" style="left:402.5px;top:569.00px;font-size:8.2px;letter-spacing:-1.344px;">0%</div>
<div class="t" style="left:546.7px;top:569.00px;font-size:8.2px;color:#b9b9b9;letter-spacing:-0.280px;">Cancel</div>
<div class="t" style="left:289.0px;top:585.00px;font-size:8.2px;letter-spacing:-0.281px;">Help</div>
<div class="t" style="left:320.7px;top:585.00px;font-size:8.2px;letter-spacing:-0.260px;">Run as Batch Process…</div>
<div class="t" style="left:515.3px;top:585.00px;font-size:8.2px;letter-spacing:-0.509px;"><u>C</u>lose</div>
<div class="t" style="left:555.8px;top:585.00px;font-size:8.2px;letter-spacing:-0.816px;">Run</div>
<div class="t" style="left:577.7px;top:86.00px;font-size:8.2px;letter-spacing:-0.225px;">Use Canvas Extent</div>
<div class="t" style="left:577.7px;top:99.00px;font-size:8.2px;color:#ffffff;letter-spacing:-0.185px;">Select Extent on Canvas</div>
<div class="t" style="left:577.7px;top:113.00px;font-size:8.2px;letter-spacing:-0.169px;">Use Layer Extent…</div>
</div>
<!-- annotation rectangles (semi-transparent fill, red border) -->
<div class="an" style="left:203.2px;top:14.8px;width:29.8px;height:13.1px"></div>
<div class="an" style="left:64.5px;top:152.8px;width:115.3px;height:11.1px"></div>
<div class="an" style="left:74.8px;top:171.9px;width:181.7px;height:14.5px"></div>
<div class="an" style="left:549.2px;top:73.3px;width:28.5px;height:20.4px"></div>
<div class="an" style="left:555.8px;top:93px;width:125.8px;height:17.8px"></div>
<!-- mouse cursor -->
<svg style="left:663px;top:102.5px" width="7" height="9" viewBox="0 0 7 9"><path d="M0.5 0.3 L0.5 6.8 L2.1 5.4 L3.2 8 L4.3 7.5 L3.2 5 L5.2 5z" fill="#111" stroke="#fff" stroke-width=".5"/></svg>
</body></html>
